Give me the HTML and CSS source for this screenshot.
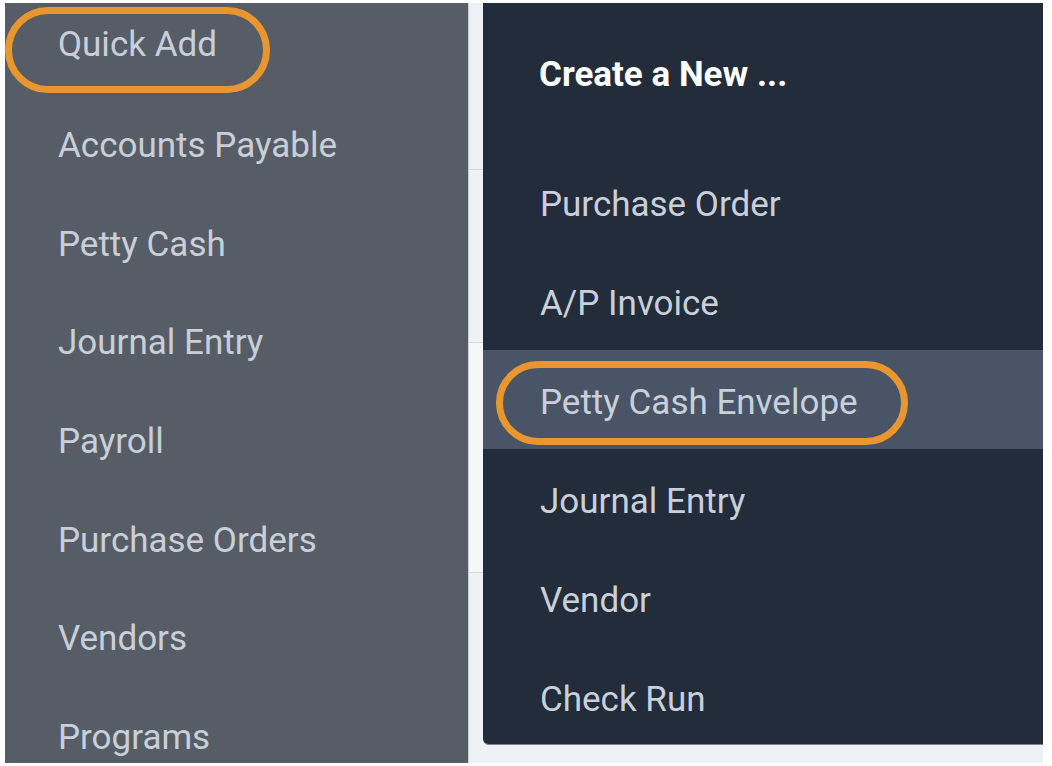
FILE: index.html
```html
<!DOCTYPE html>
<html lang="en">
<head>
<meta charset="utf-8">
<title>Quick Add</title>
<link rel="stylesheet" href="styles.css">
</head>
<body>
<div class="app">
  <nav class="sidebar">
    <ul class="nav-list">
      <li class="nav-item first"><span class="label ring ring-side">Quick Add</span></li>
      <li class="nav-item"><span class="label">Accounts Payable</span></li>
      <li class="nav-item"><span class="label">Petty Cash</span></li>
      <li class="nav-item"><span class="label">Journal Entry</span></li>
      <li class="nav-item"><span class="label">Payroll</span></li>
      <li class="nav-item"><span class="label">Purchase Orders</span></li>
      <li class="nav-item"><span class="label">Vendors</span></li>
      <li class="nav-item"><span class="label">Programs</span></li>
    </ul>
  </nav>
  <div class="main">
    <div class="strip">
      <div class="strip-block b1"></div>
      <div class="strip-block b2"></div>
      <div class="strip-block b3"></div>
      <div class="strip-block b4"></div>
    </div>
    <div class="menu">
      <div class="menu-header">Create a New ...</div>
      <ul class="menu-list">
        <li class="menu-item"><span class="label">Purchase Order</span></li>
        <li class="menu-item"><span class="label">A/P Invoice</span></li>
        <li class="menu-item active"><span class="label ring ring-menu">Petty Cash Envelope</span></li>
        <li class="menu-item"><span class="label">Journal Entry</span></li>
        <li class="menu-item"><span class="label">Vendor</span></li>
        <li class="menu-item"><span class="label">Check Run</span></li>
      </ul>
    </div>
  </div>
</div>
</body>
</html>
```

FILE: styles.css
```css
* { box-sizing: border-box; }
html, body { margin: 0; padding: 0; background: #ffffff; }
body {
  font-family: Roboto, "Liberation Sans", sans-serif;
  width: 1052px;
  height: 766px;
  overflow: hidden;
}
ul { list-style: none; margin: 0; padding: 0; }

.app {
  display: flex;
  padding: 3px 9px 3px 5px;
  height: 766px;
}

.sidebar {
  width: 463px;
  height: 760px;
  background: #575d66;
  overflow: hidden;
}
.nav-list { margin-top: -10px; }
.nav-item {
  height: 98.7px;
  display: flex;
  align-items: center;
  padding-left: 53px;
  font-size: 35px;
  color: #c8cfd9;
}
.nav-item.first { height: 103.6px; }

.label { position: relative; line-height: 42px; }

.ring::before {
  content: "";
  position: absolute;
  border: 7px solid #e9962f;
  border-radius: 60px;
  pointer-events: none;
}
.ring-side::before { left: -53px; right: -53px; top: -17px; bottom: -27px; }
.ring-menu::before { left: -44px; right: -50px; top: -21px; bottom: -21px; }

.main {
  flex: 1;
  display: flex;
  height: 760px;
  background: #eef1f5;
  border-left: 1px solid #c9ced4;
}

.strip {
  width: 14px;
  display: flex;
  flex-direction: column;
}
.strip-block { border-bottom: 1px solid #d6dadf; }
.b1 { height: 167px; background: #edf0f4; }
.b2 { height: 173px; background: #eef1f5; }
.b3 { height: 230px; background: #f4f6f9; }
.b4 { flex: 1; border-bottom: 0; }

.menu {
  width: 560px;
  height: 742px;
  background: #222c3a;
  border-radius: 0 0 0 6px;
  border-bottom: 1px solid #7d8590;
  overflow: hidden;
}
.menu-header {
  height: 149px;
  padding: 51px 0 0 56px;
  font-size: 35px;
  font-weight: 700;
  line-height: 42px;
  color: #ffffff;
}
.menu-item {
  height: 99px;
  display: flex;
  align-items: center;
  padding: 6px 0 0 57px;
  font-size: 35px;
  color: #c9d0da;
}
.menu-item.active { background: #4a5467; }
```
